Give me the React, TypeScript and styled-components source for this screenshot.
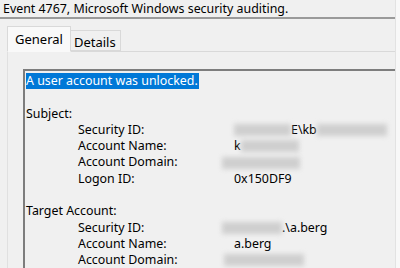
import styled, { createGlobalStyle } from "styled-components";

const GlobalStyle = createGlobalStyle`
  body {
    margin: 0;
    background: #f0f0f0;
    font-family: "Noto Sans", "Open Sans", sans-serif;
    font-size: 12.4px;
    color: #000000;
    overflow: hidden;
  }
`;

interface Field {
  label: string;
  value?: React.ReactNode;
}

const subject: Field[] = [
  {
    label: "Security ID:",
    value: (
      <>
        <Smudge w={57} />E\kb<Smudge w={70} />
      </>
    ),
  },
  {
    label: "Account Name:",
    value: (
      <>
        k<Smudge w={58} />
      </>
    ),
  },
  { label: "Account Domain:", value: <Smudge w={78} shift={-12} /> },
  { label: "Logon ID:", value: "0x150DF9" },
];

const target: Field[] = [
  {
    label: "Security ID:",
    value: (
      <>
        <Smudge w={60} shift={-12} />.\a.berg
      </>
    ),
  },
  { label: "Account Name:", value: "a.berg" },
  { label: "Account Domain:", value: <Smudge w={80} shift={-10} /> },
];

export default function App() {
  return (
    <>
      <GlobalStyle />
      <Frame>
        <Main>
          <Header>Event 4767, Microsoft Windows security auditing.</Header>
          <TabBar>
            <Tab active>General</Tab>
            <Tab active={false}>Details</Tab>
          </TabBar>
          <Panel>
            <TextBox>
              <Line>
                <Selected>A user account was unlocked.</Selected>
              </Line>
              <Line />
              <Line>Subject:</Line>
              {subject.map((f, i) => (
                <Row key={"s" + i} field={f} />
              ))}
              <Line />
              <Line>Target Account:</Line>
              {target.map((f, i) => (
                <Row key={"t" + i} field={f} />
              ))}
            </TextBox>
          </Panel>
        </Main>
        <Edge />
      </Frame>
    </>
  );
}

function Row({ field }: { field: Field }) {
  return (
    <Line>
      <Label>{field.label}</Label>
      <Value>{field.value}</Value>
    </Line>
  );
}

function Smudge({ w, shift = 0 }: { w: number; shift?: number }) {
  return <Blur style={{ width: w, marginLeft: shift }} />;
}

const Frame = styled.div`
  display: flex;
  width: 400px;
  height: 268px;
`;

const Main = styled.div`
  width: 395px;
  display: flex;
  flex-direction: column;
`;

const Edge = styled.div`
  flex: 1;
  background: #f8f8f8;
  border-left: 1px solid #e2e2e2;
`;

const Header = styled.div`
  height: 17px;
  padding: 0 0 0 3px;
  line-height: 17px;
  white-space: nowrap;
  border-bottom: 2px solid #9a9a9a;
`;

const TabBar = styled.div`
  display: flex;
  align-items: flex-end;
  padding: 7px 0 0 7px;
  height: 25px;
  position: relative;
  z-index: 1;
`;

const Tab = styled.div<{ active: boolean }>`
  box-sizing: border-box;
  height: ${({ active }) => (active ? "26px" : "21px")};
  margin-bottom: ${({ active }) => (active ? "-1px" : "0")};
  padding: ${({ active }) => (active ? "2px 7px 0 7px" : "1px 4px 0 3px")};
  background: ${({ active }) => (active ? "#f9f9f9" : "#f0f0f0")};
  border: 1px solid #d9d9d9;
  border-bottom: ${({ active }) =>
    active ? "1px solid #f9f9f9" : "1px solid #d9d9d9"};
  border-left: ${({ active }) => (active ? "1px solid #d9d9d9" : "none")};
  line-height: 20px;
  font-size: 13px;
`;

const Panel = styled.div`
  flex: 1;
  margin-left: 7px;
  border-top: 1px solid #d9d9d9;
  border-left: 1px solid #e0e0e0;
  padding: 17px 0 0 15px;
`;

const TextBox = styled.div`
  height: 100%;
  border-top: 2px solid #7d7d7d;
  border-left: 2px solid #7d7d7d;
  padding: 2px 0 0 1px;
`;

const Line = styled.div`
  display: flex;
  height: 16.3px;
  line-height: 16.3px;
  white-space: nowrap;
`;

const Selected = styled.span`
  background: #0078d7;
  color: #ffffff;
  padding-right: 1px;
`;

const Label = styled.span`
  width: 156px;
  padding-left: 52px;
`;

const Value = styled.span`
  display: flex;
  align-items: center;
`;

const Blur = styled.span`
  display: inline-block;
  height: 12px;
  background: #cfcfcf;
  filter: blur(2.5px);
`;
